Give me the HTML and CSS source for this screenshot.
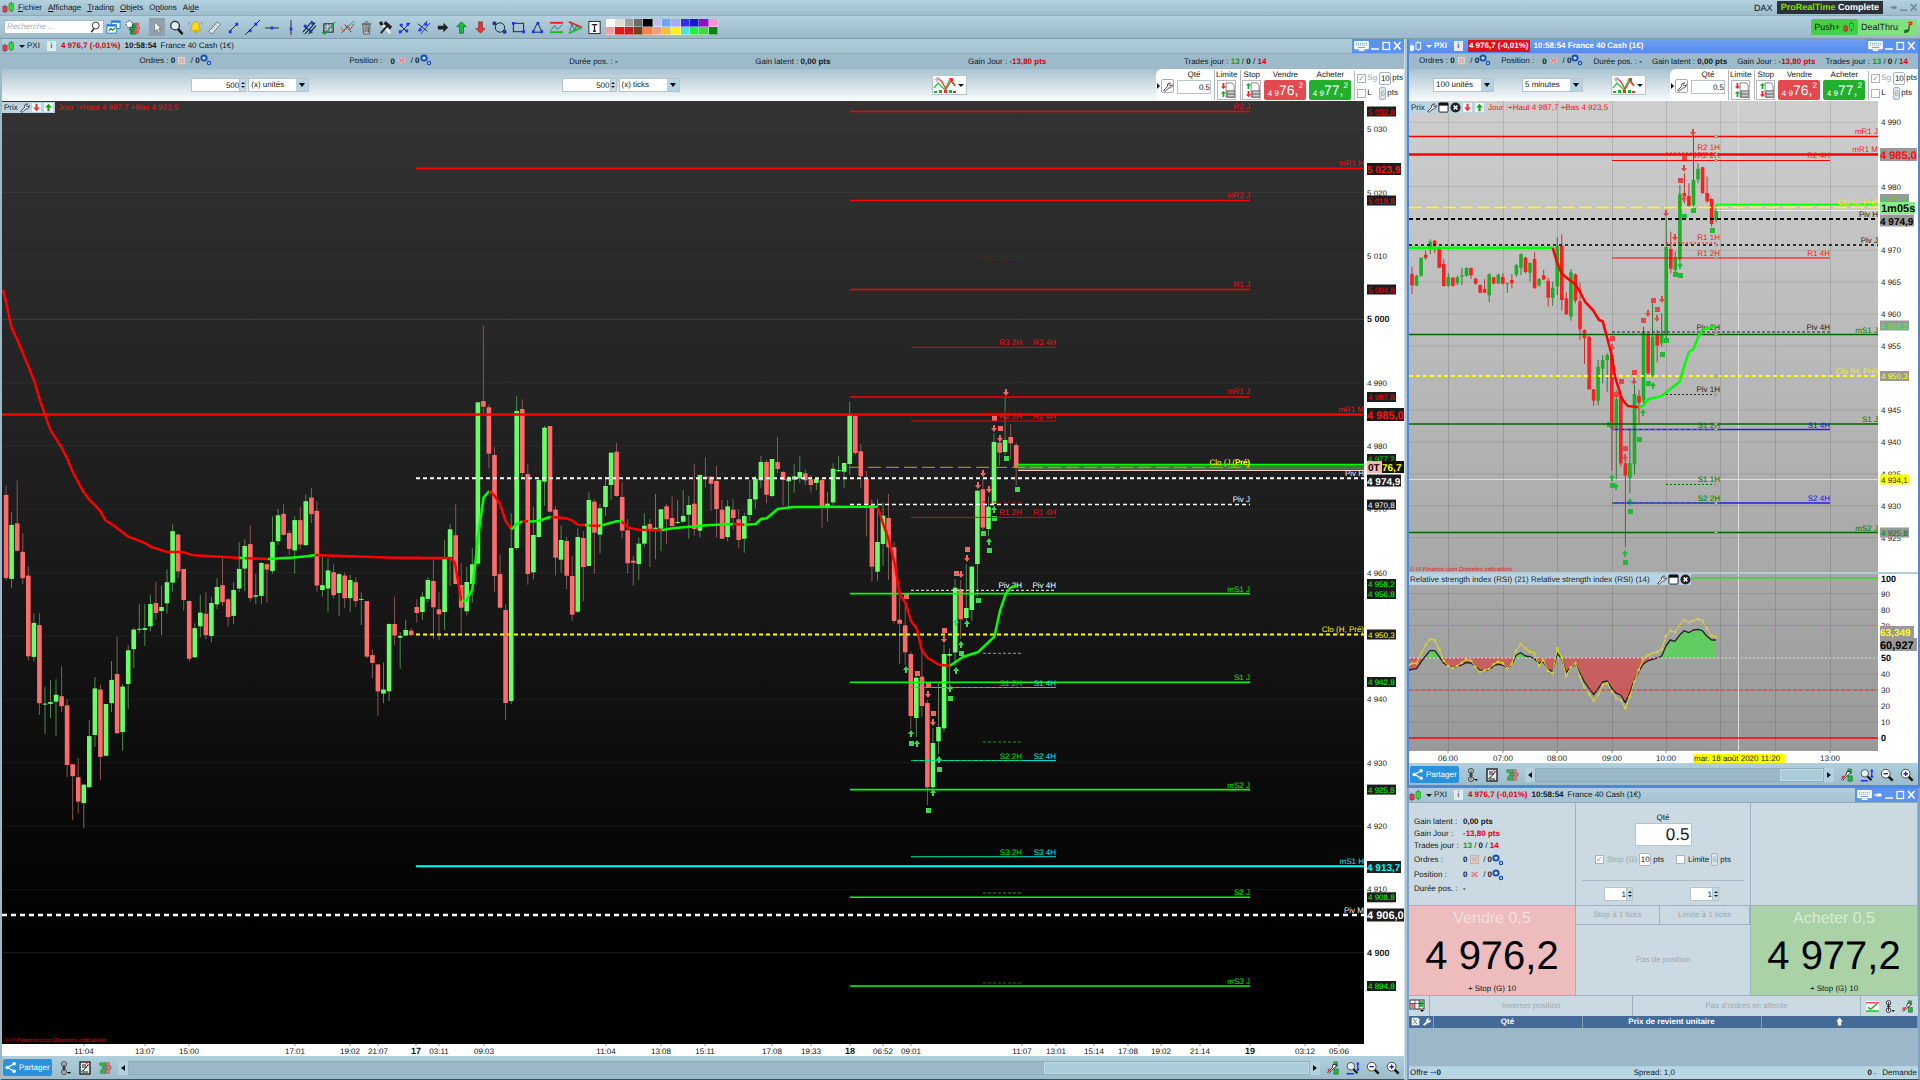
FILE: index.html
```html
<!DOCTYPE html>
<html lang="fr">
<head>
<meta charset="utf-8">
<title>ProRealTime Complete - DAX</title>
<link rel="stylesheet" href="styles.css">
</head>
<body>
<svg class="sprite" aria-hidden="true">
  <symbol id="i-candles" viewBox="0 0 14 14"><path d="M3 4v9M10 1v11" stroke="#333" stroke-width=".8"/><rect x="1" y="6" width="4.500" height="5.500" fill="#e0404a" stroke="#a02028" stroke-width=".6"/><rect x="7.500" y="3" width="5" height="7" fill="#30d840" stroke="#159020" stroke-width=".6"/></symbol>
  <symbol id="i-candles-w" viewBox="0 0 14 14"><path d="M3 4v9M10 1v11" stroke="#fff" stroke-width=".8"/><rect x="1" y="6" width="4.500" height="5.500" fill="#fff"/><rect x="7.500" y="3" width="5" height="7" fill="#5b92f0" stroke="#fff"/></symbol>
  <symbol id="i-gear" viewBox="0 0 12 12"><circle cx="4" cy="4" r="2.600" fill="#cfe0ff" stroke="#1450b8" stroke-width="2"/><circle cx="9" cy="9" r="1.600" fill="#cfe0ff" stroke="#1450b8" stroke-width="1.300"/></symbol>
  <symbol id="i-del" viewBox="0 0 10 10"><rect x=".5" y=".5" width="9" height="9" fill="#d6d2cf" stroke="#b8b4b0"/><path d="M2.500 2.500l5 5M7.500 2.500l-5 5" stroke="#e0a8a0" stroke-width="1.600"/></symbol>
  <symbol id="i-delr" viewBox="0 0 10 10"><path d="M1 2h8v6H1z" fill="#dcc0c6"/><path d="M2 2.500l6 5M8 2.500l-6 5" stroke="#e08088" stroke-width="1.400"/></symbol>
  <symbol id="i-wrench" viewBox="0 0 14 14"><path d="M2 12l5-5c-.8-3 1.500-5 4-4.500L9 4.500l1 1.500h2l1-1.500c.6 3-2 4.800-4 4.200L4 13z" fill="#fff" stroke="#222" stroke-width="1"/></symbol>
  <symbol id="i-win" viewBox="0 0 12 12"><rect x="1" y="1" width="10" height="10" rx="1" fill="#fff" stroke="#111"/><path d="M1 1h10v3H1z" fill="#111"/></symbol>
  <symbol id="i-tabs" viewBox="0 0 12 12"><path d="M1 1h8l2 2v8H1z" fill="#fff"/><path d="M3 3l5 6M8 3L3 9M3 3h2M8 9H6" stroke="#446a98"/></symbol>
  <symbol id="i-wrench-w" viewBox="0 0 14 14"><path d="M2 12l5-5c-.8-3 1.500-5 4-4.500L9 4.500l1 1.500h2l1-1.500c.6 3-2 4.800-4 4.200L4 13z" fill="#fff" stroke="#fff"/></symbol>
  <symbol id="i-close" viewBox="0 0 12 12"><circle cx="6" cy="6" r="5.500" fill="#222"/><path d="M4 4l4 4M8 4l-4 4" stroke="#fff" stroke-width="1.700"/></symbol>
  <symbol id="i-up" viewBox="0 0 10 10"><path d="M1 1h8v8H1z" fill="#f4f8fa"/><path d="M5 1.500L8 5H6v3.500H4V5H2z" fill="#1a1"/></symbol>
  <symbol id="i-down" viewBox="0 0 10 10"><path d="M1 1h8v8H1z" fill="#f4f8fa"/><path d="M5 8.500L2 5h2V1.500h2V5h2z" fill="#e33"/></symbol>
  <symbol id="i-kbd" viewBox="0 0 16 12"><rect x="0" y="0" width="16" height="9" rx="1" fill="#fff"/><path d="M2 2.500h12M2 4.500h12" stroke="#5b92f0" stroke-dasharray="1.300 .9"/><path d="M4 7h8" stroke="#5b92f0"/><path d="M5 9h6v2H5z" fill="#fff"/></symbol>
  <symbol id="i-min" viewBox="0 0 10 10"><path d="M1 8h8" stroke="currentColor" stroke-width="1.500"/></symbol>
  <symbol id="i-max" viewBox="0 0 10 10"><rect x="2" y="1.500" width="6.500" height="7" fill="none" stroke="currentColor" stroke-width="1.300"/></symbol>
  <symbol id="i-x" viewBox="0 0 10 10"><path d="M2 1l6.500 7.500M8.500 1L2 8.500" stroke="currentColor" stroke-width="1.700"/></symbol>
  <symbol id="i-pin" viewBox="0 0 10 10"><path d="M1 5h3M4 3v4M5 4h3v2H5z" stroke="currentColor" fill="currentColor"/></symbol>
  <symbol id="i-wins" viewBox="0 0 16 16"><rect x="6" y="1" width="9" height="8" fill="#fff" stroke="#2c7be0"/><path d="M6 2h9" stroke="#2c7be0" stroke-width="2"/><rect x="1" y="5" width="10" height="9" fill="#fff" stroke="#2c7be0"/><path d="M1 6h10" stroke="#2c7be0" stroke-width="2"/><path d="M3 12l2-3 2 2 3-3" stroke="#191" fill="none" stroke-width="1.200"/></symbol>
  <symbol id="i-book" viewBox="0 0 16 16"><path d="M2 2h7v3H2zM5 6h5v3H5zM3 10h6v4H3z" fill="#3cb84a" stroke="#274" stroke-width=".6"/><path d="M9 2h4v3H9zM10 6h5v3h-5zM9 10h4v4H9z" fill="#e88080" stroke="#944" stroke-width=".6"/></symbol>
  <symbol id="i-bookgear" viewBox="0 0 16 16"><path d="M6 4h6v3H6zM5 8h7v3H5zM6 12h6v3H6z" fill="#2a9a3a" stroke="#174"/><path d="M11 3h4v3h-4zM11 7h5v3h-5zM10 11h5v3h-5z" fill="#e05a5a"/><circle cx="4.500" cy="4.500" r="3.500" fill="#fff" stroke="#333" stroke-dasharray="2 1"/></symbol>
  <symbol id="i-cursor" viewBox="0 0 16 16"><path d="M5 2v10l2.500-2 2 4 1.700-.8-2-4H12z" fill="#fff" stroke="#777" stroke-width=".9"/></symbol>
  <symbol id="i-zoom" viewBox="0 0 16 16"><path d="M9 9l5.500 6" stroke="#111" stroke-width="2.600"/><circle cx="6.500" cy="6" r="4.600" fill="#dfeef6" stroke="#222" stroke-width="1.300"/></symbol>
  <symbol id="i-find" viewBox="0 0 16 16"><path d="M6.500 10L3 15" stroke="#333" stroke-width="2"/><circle cx="9" cy="6" r="4.600" fill="#fff" stroke="#333" stroke-width="1.300"/></symbol>
  <symbol id="i-zin" viewBox="0 0 16 16"><path d="M9.500 9.500l5 5" stroke="#111" stroke-width="2.800"/><circle cx="6.500" cy="6.500" r="5" fill="#fff" stroke="#333"/><path d="M4 6.500h5M6.500 4v5" stroke="#22c" stroke-width="1.600"/></symbol>
  <symbol id="i-zout" viewBox="0 0 16 16"><path d="M9.500 9.500l5 5" stroke="#111" stroke-width="2.800"/><circle cx="6.500" cy="6.500" r="5" fill="#fff" stroke="#333"/><path d="M4 6.500h5" stroke="#22c" stroke-width="1.600"/></symbol>
  <symbol id="i-zfit" viewBox="0 0 16 16"><path d="M8 9l5 5" stroke="#111" stroke-width="2.400"/><circle cx="5.500" cy="6" r="4.300" fill="#e4eef4" stroke="#444"/><path d="M13.500 2v9M2 14.500h7" stroke="#23e" stroke-width="1.600"/><path d="M11.500 4l2-3 2 3zM11.500 9l2 3 2-3zM0 14.500l3-1.500v3z" fill="#23e"/></symbol>
  <symbol id="i-bell" viewBox="0 0 16 16"><path d="M8 2c3.500 0 4 3 4 6l1.500 3.500h-11L4 8c0-3 .5-6 4-6z" fill="#ffd820" stroke="#c89000" stroke-width=".7"/><path d="M6.500 12.500h3L8 15z" fill="#c89000"/><path d="M2 2l-1.500 3M14 2l1.500 3" stroke="#888"/></symbol>
  <symbol id="i-ruler" viewBox="0 0 16 16"><path d="M2 12L11 2l3 3L5 15z" fill="#e8eef0" stroke="#555" stroke-width=".8"/><path d="M5 9l1.500 1.500M7 7l1.500 1.500M9 5l1.500 1.500" stroke="#555" stroke-width=".8"/></symbol>
  <symbol id="i-seg" viewBox="0 0 16 16"><path d="M4 12l8-8" stroke="#222"/><path d="M3 11h3v3H3zM10 3h3v3h-3z" fill="#23e"/></symbol>
  <symbol id="i-line" viewBox="0 0 16 16"><path d="M0 16L16 0" stroke="#222"/><path d="M4 10h3v3H4zM10 3h3v3h-3z" fill="#23e"/></symbol>
  <symbol id="i-hl" viewBox="0 0 16 16"><path d="M1 8.500h15" stroke="#222"/><path d="M7 7h3v3H7z" fill="#23e"/></symbol>
  <symbol id="i-vl" viewBox="0 0 16 16"><path d="M8.500 0v16" stroke="#222"/><path d="M7 8h3v3H7z" fill="#23e"/></symbol>
  <symbol id="i-fork" viewBox="0 0 16 16"><path d="M1 13L11 1M3 15L14 3M7 15l8-9M2 6l9 8" stroke="#123" stroke-width="1.100"/><path d="M2 5h3v3H2zM8 10h3v3H8zM10 2h3v3h-3z" fill="#23e"/></symbol>
  <symbol id="i-study" viewBox="0 0 16 16"><rect x="3" y="4" width="10" height="9" fill="#89a" stroke="#223"/><path d="M4 7h8M4 10h8M7 4v9M10 4v9" stroke="#dde" stroke-width=".7"/><path d="M1 13l3 2 11-13" stroke="#1a3" stroke-width="1.400" fill="none"/></symbol>
  <symbol id="i-reg" viewBox="0 0 16 16"><path d="M1 14L15 1" stroke="#1a3"/><path d="M1 8l3 4 4-6 3 4 4-6" stroke="#c33" fill="none"/><path d="M5 5l7 8" stroke="#222" stroke-dasharray="2 1"/></symbol>
  <symbol id="i-trash" viewBox="0 0 16 16"><path d="M4 5h8l-1 10H5z" fill="#ccc" stroke="#555"/><path d="M3 4h10M6 2h4M6.500 6v7M8.500 6v7M10 6v7" stroke="#555"/></symbol>
  <symbol id="i-tools" viewBox="0 0 16 16"><path d="M4 4l9 10" stroke="#eee" stroke-width="2.500"/><path d="M3 14L11 5" stroke="#222" stroke-width="2"/><path d="M8 1l7 6-2 3-7-6zM1 3l3-2 2 4-3 1z" fill="#222"/></symbol>
  <symbol id="i-x1" viewBox="0 0 16 16"><path d="M3 14L14 3M3 5l8 8" stroke="#123"/><path d="M2 11h3v3H2zM10 3h3v3h-3zM3 4h3v3H3zM9 10h3v3H9z" fill="#23e"/></symbol>
  <symbol id="i-x2" viewBox="0 0 16 16"><path d="M2 12L12 1M5 15L15 3" stroke="#23e"/><path d="M2 4l10 8" stroke="#222"/><path d="M3 9h3v3H3zM9 3h3v3H9z" fill="#23e"/></symbol>
  <symbol id="i-right" viewBox="0 0 16 16"><path d="M14 8L9 3v3H3v4h6v3z" fill="#222"/></symbol>
  <symbol id="i-bup" viewBox="0 0 16 16"><path d="M8 2l5 5H10v7H6V7H3z" fill="#2b3" stroke="#174"/></symbol>
  <symbol id="i-wup" viewBox="0 0 16 16"><path d="M8 1l6 7h-3v7H5V8H2z" fill="#fff"/></symbol>
  <symbol id="i-bdn" viewBox="0 0 16 16"><path d="M8 14L3 9h3V2h4v7h3z" fill="#e33" stroke="#822" stroke-width=".7"/></symbol>
  <symbol id="i-ell" viewBox="0 0 16 16"><circle cx="8.500" cy="8" r="5" fill="none" stroke="#123"/><path d="M1 2h3v3H1zM12 11h3v3h-3zM1 4h4" fill="#23e" stroke="#123" stroke-width=".6"/></symbol>
  <symbol id="i-rect" viewBox="0 0 16 16"><rect x="2.500" y="3.500" width="11" height="9" fill="none" stroke="#123"/><path d="M1 2h3v3H1zM12 11h3v3h-3z" fill="#23e"/></symbol>
  <symbol id="i-tri" viewBox="0 0 16 16"><path d="M8 3l5 10H3z" fill="none" stroke="#123"/><path d="M7 2h3v3H7zM2 11h3v3H2zM11 11h3v3h-3z" fill="#23e"/></symbol>
  <symbol id="i-pat1" viewBox="0 0 16 16"><path d="M1 3h14" stroke="#e22" stroke-width="2"/><path d="M1 13h14" stroke="#1b2" stroke-width="2"/><path d="M2 11l4-5 3 4 5-5" fill="none" stroke="#276"/></symbol>
  <symbol id="i-pat2" viewBox="0 0 16 16"><path d="M1 2l14 6" stroke="#e22" stroke-width="2"/><path d="M1 14L15 8" stroke="#1b2" stroke-width="2"/><path d="M2 12l2-8 3 7 2-5 2 3" fill="none" stroke="#276"/></symbol>
  <symbol id="i-text" viewBox="0 0 16 16"><rect x="2" y="1.500" width="12" height="13" fill="#fff" stroke="#222"/><path d="M5 5h6M8 5v7M6.500 12h3" stroke="#222" stroke-width="1.400"/></symbol>
  <symbol id="i-chart" viewBox="0 0 24 18"><path d="M1 12l4-5 3 3 4 4 5-11 5 6" fill="none" stroke="#2c3" stroke-width="1.300"/><path d="M5 2l4 4 4 7 5-8 4 5" fill="none" stroke="#e33" stroke-width="1.300"/><path d="M4 1v5M1.500 3.500h5" stroke="#bbb" stroke-width="1.600"/><path d="M17 2h3v3h-3z" fill="#e33"/><path d="M1 15h3v2H1zM6 14h3v3H6zM16 14h3v3h-3z" fill="#2a3"/><path d="M11 14h3v3h-3zM20 15h3v2h-3z" fill="#d33"/></symbol>
  <symbol id="i-lim" viewBox="0 0 18 20"><path d="M8 2h7l2 3v13H8z" fill="#fff" stroke="#777"/><path d="M9 11h9v7H9z" fill="#ccc" stroke="#555"/><path d="M9 14.500h9" stroke="#555"/><path d="M5 9L2 6h2V2h2v4h2z" fill="#e22"/><path d="M5 11l3 3H6v4H4v-4H2z" fill="#1a2"/></symbol>
  <symbol id="i-stp" viewBox="0 0 18 20"><path d="M8 2h7l2 3v13H8z" fill="#fff" stroke="#777"/><path d="M9 11h9v7H9z" fill="#ccc" stroke="#555"/><path d="M9 14.500h9" stroke="#555"/><path d="M5 2l3 3H6v4H4V5H2z" fill="#1a2"/><path d="M5 18l-3-3h2v-4h2v4h2z" fill="#e22"/></symbol>
  <symbol id="i-share" viewBox="0 0 12 12"><path d="M10 2L3 6l7 4" stroke="#fff" fill="none" stroke-width="1.300"/><circle cx="10" cy="2" r="1.900" fill="#fff"/><circle cx="2.500" cy="6" r="2" fill="#fff"/><circle cx="10" cy="10" r="1.900" fill="#fff"/></symbol>
  <symbol id="i-link" viewBox="0 0 12 14"><circle cx="5" cy="3" r="2.400" fill="#fff" stroke="#222"/><circle cx="5" cy="11" r="2.400" fill="#fff" stroke="#222"/><path d="M5 2v10M3 7h4" stroke="#222"/><path d="M8 11h4l-2 2z"/></symbol>
  <symbol id="i-doc" viewBox="0 0 12 14"><rect x="1" y="1" width="10" height="12" fill="#e8e8e8" stroke="#222" stroke-width="1.400"/><path d="M3 4h4M3 6h5M4 10l5-6M3 11h6" stroke="#222"/><path d="M7 2l3 2" stroke="#e33"/><path d="M2 11l2-2" stroke="#1a2"/></symbol>
  <symbol id="i-setup" viewBox="0 0 16 16"><path d="M9 1h4v5H9zM9 9h5v6H9z" fill="#2b3" stroke="#153" stroke-width=".6"/><path d="M2 13l5-5 1-4 4 0-1 3-3 2-5 5z" fill="#fff" stroke="#222"/><path d="M2 9h3v3H2z" fill="#e33"/></symbol>
  <symbol id="i-lay" viewBox="0 0 16 14"><rect x="1" y="1" width="14" height="9" fill="#fff" stroke="#333"/><path d="M2 4h4v5H2z" fill="#e77"/><path d="M10 2h4v6h-4z" fill="#3b4"/><path d="M1 4.500h14M6 1v9M10 1v9" stroke="#333" stroke-width=".7"/><path d="M11 11h4l-2 2z"/></symbol>
  <symbol id="i-check" viewBox="0 0 14 14"><rect x="0" y="1" width="14" height="12" fill="#fff"/><path d="M0 3h14" stroke="#e44" stroke-width="1.500"/><path d="M0 12h14" stroke="#3c4" stroke-width="2"/><path d="M2 8l3 2 7-6" stroke="#2a3" fill="none" stroke-width="1.500"/></symbol>
  <symbol id="i-deal" viewBox="0 0 12 16"><path d="M7 2c4 0 4-1 4-1v3C8 4 8 5 8 8" stroke="#e22" stroke-width="2" fill="none"/><path d="M8 8c0 4-1 6-6 6M2 12l6-1" stroke="#186820" stroke-width="2" fill="none"/></symbol>
</svg>

<header class="app-head">
  <nav class="menu">
    <svg class="ic14"><use href="#i-candles"/></svg>
    <a href="#"><u>F</u>ichier</a><a href="#"><u>A</u>ffichage</a><a href="#"><u>T</u>rading</a><a href="#"><u>O</u>bjets</a><a href="#">O<u>p</u>tions</a><a href="#">Ai<u>d</u>e</a>
    <span class="account">DAX</span>
    <span class="brand"><em>ProRealTime</em> Complete</span>
    <span class="win-btns faded"><button aria-label="Épingler"><svg><use href="#i-pin"/></svg></button><button aria-label="Réduire"><svg><use href="#i-min"/></svg></button><button aria-label="Fermer"><svg><use href="#i-x"/></svg></button></span>
  </nav>
  <div class="tools">
    <label class="search"><input type="text" placeholder="Recherche ..." aria-label="Recherche"><svg class="ic12"><use href="#i-find"/></svg></label>
    <div class="tool-list" id="tool-list"></div>
    <div class="palette" id="palette"></div>
    <div class="push"><button class="push-a">Push+ <svg class="ic12"><use href="#i-candles"/></svg></button><button class="push-b">DealThru <svg class="ic14"><use href="#i-deal"/></svg></button></div>
  </div>
</header>

<main class="desk">
  <section class="window main-win">
    <header class="title">
      <svg class="ic14"><use href="#i-candles"/></svg><span class="caret"></span><span>PXI</span><span class="info-i">i</span>
      <b class="neg">4 976,7 (-0,01%)</b><b>10:58:54</b><span>France 40 Cash (1€)</span>
      <span class="win-btns active"><button aria-label="Clavier"><svg class="kbd"><use href="#i-kbd"/></svg></button><button aria-label="Réduire"><svg><use href="#i-min"/></svg></button><button aria-label="Agrandir"><svg><use href="#i-max"/></svg></button><button aria-label="Fermer"><svg><use href="#i-x"/></svg></button></span>
    </header>
    <div class="stats" data-stats></div>
    <div class="chart-tools">
      <div class="periods wide">
        <span class="pair"><input class="num" value="500" aria-label="Nombre d'unités"><span class="spin"></span><select aria-label="Type d'unités"><option>(x) unités</option></select></span>
        <span class="pair"><input class="num" value="500" aria-label="Nombre de ticks"><span class="spin"></span><select aria-label="Type de ticks"><option>(x) ticks</option></select></span>
        <button class="chart-btn" aria-label="Indicateurs"><svg><use href="#i-chart"/></svg><span class="caret"></span></button>
      </div>
      <div class="trade" data-trade></div>
    </div>
    <svg class="chart" id="main-chart" viewBox="2 101 1402 955" preserveAspectRatio="xMinYMin meet" role="img" aria-label="Prix 500 ticks"></svg>
    <footer class="share-bar" data-share></footer>
  </section>

  <div class="side">
    <section class="window side-win">
      <header class="title blue">
        <svg class="ic14"><use href="#i-candles-w"/></svg><span class="caret"></span><span>PXI</span><span class="info-i">i</span>
        <b class="neg-tag">4 976,7 (-0,01%)</b><b>10:58:54 France 40 Cash (1€)</b>
        <span class="win-btns active"><button aria-label="Clavier"><svg class="kbd"><use href="#i-kbd"/></svg></button><button aria-label="Réduire"><svg><use href="#i-min"/></svg></button><button aria-label="Agrandir"><svg><use href="#i-max"/></svg></button><button aria-label="Fermer"><svg><use href="#i-x"/></svg></button></span>
      </header>
      <div class="stats" data-stats></div>
      <div class="chart-tools">
        <div class="periods">
          <select class="wide-sel" aria-label="Unités"><option>100 unités</option></select>
          <select class="wide-sel" aria-label="Période"><option>5 minutes</option></select>
          <button class="chart-btn" aria-label="Indicateurs"><svg><use href="#i-chart"/></svg><span class="caret"></span></button>
        </div>
        <div class="trade" data-trade></div>
      </div>
      <svg class="chart" id="side-chart" viewBox="1409 101 509 662" preserveAspectRatio="xMinYMin meet" role="img" aria-label="Prix 5 minutes et RSI"></svg>
      <footer class="share-bar" data-share="short"></footer>
    </section>

    <section class="window order-win">
      <header class="title">
        <svg class="ic14"><use href="#i-candles"/></svg><span class="caret"></span><span>PXI</span><span class="info-i">i</span>
        <b class="neg">4 976,7 (-0,01%)</b><b>10:58:54</b><span>France 40 Cash (1€)</span>
        <span class="win-btns active"><button aria-label="Clavier"><svg class="kbd"><use href="#i-kbd"/></svg></button><button aria-label="Épingler"><svg><use href="#i-pin"/></svg></button><button aria-label="Réduire"><svg><use href="#i-min"/></svg></button><button aria-label="Agrandir"><svg><use href="#i-max"/></svg></button><button aria-label="Fermer"><svg><use href="#i-x"/></svg></button></span>
      </header>
      <div class="ticket">
        <dl class="summary">
          <dt>Gain latent :</dt><dd><b>0,00 pts</b></dd>
          <dt>Gain Jour :</dt><dd><b class="neg">-13,80 pts</b></dd>
          <dt>Trades jour :</dt><dd><b class="pos">13</b> / <b>0</b> / <b class="neg">14</b></dd>
          <dt>Ordres :</dt><dd><b>0</b> <svg class="ic10"><use href="#i-del"/></svg> &nbsp;/ <b>0</b><svg class="ic12"><use href="#i-gear"/></svg></dd>
          <dt>Position :</dt><dd><b>0</b> <svg class="ic10"><use href="#i-delr"/></svg> &nbsp;/ <b>0</b><svg class="ic12"><use href="#i-gear"/></svg></dd>
          <dt>Durée pos. :</dt><dd><b>-</b></dd>
        </dl>
        <div class="qty">
          <label for="qty">Qté</label>
          <input id="qty" class="big-qty" value="0.5">
          <div class="risk">
            <label class="dim"><input type="checkbox" checked disabled> Stop (G)</label><input class="mini" value="10" aria-label="Stop en points"><span>pts</span>
            <label class="gap"><input type="checkbox"> Limite</label><input class="mini off" value="6" aria-label="Limite en points"><span>pts</span>
          </div>
          <div class="ticks">
            <span class="pair"><input class="num" value="1" aria-label="Ticks du stop"><span class="spin"></span></span>
            <span class="pair"><input class="num" value="1" aria-label="Ticks de la limite"><span class="spin"></span></span>
          </div>
        </div>
        <div></div>
        <button class="deal sell"><span>Vendre 0,5</span><strong>4 976,2</strong><small>+ Stop (G) 10</small></button>
        <div class="middle"><button disabled>Stop à 1 ticks</button><button disabled>Limite à 1 ticks</button><p>Pas de position</p></div>
        <button class="deal buy"><span>Acheter 0,5</span><strong>4 977,2</strong><small>+ Stop (G) 10</small></button>
      </div>
      <div class="actions">
        <svg class="ic16"><use href="#i-lay"/></svg>
        <button disabled>Inverser position</button><button disabled>Pas d'ordres en attente</button>
        <span class="icons"><svg class="ic14"><use href="#i-check"/></svg><svg class="ic14"><use href="#i-link"/></svg><svg class="ic14"><use href="#i-setup"/></svg></span>
      </div>
      <table class="positions">
        <thead><tr><th class="c-ic"><svg class="ic10"><use href="#i-tabs"/></svg> <svg class="ic10"><use href="#i-wrench-w"/></svg></th><th class="c-q">Qté</th><th class="c-p">Prix de revient unitaire</th><th><svg class="ic10"><use href="#i-wup"/></svg></th></tr></thead>
      </table>
      <footer class="spread"><span>Offre <i>➞</i><b>0</b></span><span>Spread: 1,0</span><span><b>0</b><i>←</i> Demande</span></footer>
    </section>
  </div>
</main>
<script src="charts.js"></script>
</body>
</html>
```
FILE: styles.css
```css
* { box-sizing: border-box; }
body {
  margin: 0; height: 100vh; min-width: 1280px; display: flex; flex-direction: column;
  font: 8px/10px "Liberation Sans", Arial, sans-serif; color: #101820; background: #9cb9c8; overflow: hidden;
  text-rendering: geometricPrecision;
}
button, input, select { font: inherit; color: inherit; margin: 0; padding: 0; border: 0; background: none; border-radius: 0; text-rendering: inherit; }
button { cursor: pointer; }
a { color: inherit; text-decoration: none; }
svg { flex: none; }
.sprite { position: absolute; width: 0; height: 0; }
.ic10 { width: 9px; height: 9px; vertical-align: middle; }
.ic12 { width: 12px; height: 12px; vertical-align: middle; }
.ic14 { width: 13px; height: 13px; }
.ic16 { width: 16px; height: 14px; }
.neg { color: #d8000c; }
.pos { color: #0a9a14; }
.caret { width: 0; height: 0; border: 3px solid transparent; border-top-color: currentColor; border-bottom: 0; }

.menu { height: 16px; display: flex; align-items: center; gap: 6px; padding: 0 2px; background: linear-gradient(#b4d1df, #9ebccb); border-bottom: 1px solid #8fabb9; }
.menu > svg { margin-right: -3px; }
.account { margin-left: auto; margin-right: -2px; font-size: 9px; }
.brand { height: 13px; padding: 1px 4px; background: #2c3238; color: #fff; font-weight: bold; font-size: 9px; }
.brand em { color: #7ee000; font-style: normal; }
.win-btns { display: flex; align-items: center; gap: 2px; margin-left: auto; height: 100%; }
.win-btns button { height: 12px; display: flex; align-items: center; }
.win-btns svg { width: 10px; height: 10px; }
.win-btns .kbd { width: 15px; height: 11px; }
.active { background: #5b92f0; color: #fff; padding: 0 2px; gap: 1px; }
.faded { color: #6d8794; margin-left: 0; gap: 1px; }
.faded svg { width: 9px; height: 9px; }

.tools { height: 23px; display: flex; align-items: center; background: linear-gradient(#b2d0de, #9bb9c8); border-bottom: 1px solid #7f9ba8; padding: 0 3px 0 4px; }
.search { width: 100px; height: 14px; display: flex; align-items: center; background: #fff; border: 1px solid #a9bac2; padding: 0 2px; }
.search input { width: 82px; font-style: italic; outline: 0; }
.search input::placeholder { color: #aaa; }
.tool-list { display: flex; gap: 3px; margin-left: 1px; }
.tool-list button { width: 16px; height: 18px; display: flex; align-items: center; justify-content: center; }
.tool-list button:nth-child(3) { background: #8ea3ae; margin-left: 6px; }
.tool-list svg { width: 15px; height: 15px; }
.palette { width: 112px; height: 16px; display: grid; grid-template-columns: repeat(12, 1fr); grid-auto-rows: 8px; margin-left: 4px; }
.palette button { border: 1px solid rgba(255,255,255,.4); border-width: 0 1px 1px 0; }
.push { margin-left: auto; display: flex; }
.push button { height: 16px; display: flex; align-items: center; gap: 3px; padding: 0 3px; border-radius: 2px; font-size: 9px; }
.push-a { background: #45cf45; }
.push-b { background: #7fe27f; }

.desk { flex: 1; min-height: 0; display: grid; grid-template-columns: 1405fr 515fr; }
.window { display: flex; flex-direction: column; min-width: 0; min-height: 0; }
.main-win { border-left: 2px solid #9cb9c8; border-bottom: 1px solid #3d4d55; border-right: 1px solid #cfe0e8; }
.side { display: flex; flex-direction: column; min-height: 0; padding-left: 2px; background: #a9c4d2; }
.side-win { flex: 1; border: solid #4d87de; border-width: 0 2px 3px; }
.order-win { border: solid #7fa2c8; border-width: 0 2px; border-bottom: 1px solid #3d4d55; }

.title { flex: none; height: 15px; display: flex; align-items: center; gap: 4px; background: linear-gradient(#b0cfdd, #a4c2d0); border-bottom: 1px solid #8fabb9; white-space: nowrap; }
.title .caret { margin: 0 -2px 0 0; }
.title.blue { background: linear-gradient(#6fa0f4, #558bec); color: #fff; font-weight: bold; }
.info-i { width: 9px; height: 10px; background: #e4ebee; color: #667; text-align: center; margin: 0 1px 0 3px; font-weight: bold; }
.neg-tag { background: #e0101a; padding: 1px; }

.stats { flex: none; height: 15px; display: flex; align-items: center; justify-content: space-evenly; white-space: nowrap; background: #9cbaca; }
.stats svg { margin-top: -2px; }
.stats .pad { padding-left: 6px; }
.chart-tools { flex: none; height: 32px; display: flex; background: linear-gradient(#a9c3d0, #fafcfd); }
.periods { flex: 1; display: flex; align-items: center; justify-content: space-between; padding: 0 24px; }
.periods.wide { padding: 0 13.5%; }
.pair { display: inline-flex; align-items: center; }
.pair .num { width: 48px; height: 14px; text-align: right; background: #fff; border: 1px solid #b5c4cb; border-right: 0; }
.spin { width: 7px; height: 14px; background: #c5dbe6; border: 1px solid #b5c4cb; display: flex; flex-direction: column; align-items: center; justify-content: space-evenly; }
.spin::before, .spin::after { content: ""; border: 2px solid transparent; }
.spin::before { border-bottom-color: #222; border-top: 0; }
.spin::after { border-top-color: #222; border-bottom: 0; }
select { appearance: none; width: 61px; height: 14px; padding-left: 2px; border: 1px solid #b5c4cb;
  background: #fff url("data:image/svg+xml,%3Csvg xmlns='http://www.w3.org/2000/svg' width='12' height='12'%3E%3Cpath d='M0 0h12v12H0z' fill='%23b5d3e2'/%3E%3Cpath d='M3 4h6l-3 4z'/%3E%3C/svg%3E") no-repeat right center; }
.pair select { margin-left: 2px; }
.chart-btn { width: 35px; height: 20px; background: #fff; border: 1px solid #b8c6cc; display: flex; align-items: center; justify-content: space-between; padding-right: 2px; }
.chart-btn svg { width: 24px; height: 18px; }

.trade { width: 248px; flex: none; background: #fff; border-radius: 6px 0 0 6px; display: flex; align-items: flex-end; padding: 1px 1px 1px 0; gap: 3px; }
.trade::before { content: ""; border: 3px solid transparent; border-left-color: #111; border-right: 0; margin: 0 -2px 11px 1px; }
.trade > label, .trade > div { display: flex; flex-direction: column; align-items: center; }
.trade .wr { width: 13px; height: 14px; border: 1px solid #aab; border-radius: 2px; margin-bottom: 7px; display: flex; align-items: center; }
.trade .wr svg { width: 11px; height: 11px; }
.trade .q { width: 34px; height: 14px; border: 1px solid #b8c6cc; text-align: right; margin-bottom: 6px; background: #fff; }
.trade .ls { border-left: 1px solid #aeb8bc; padding-left: 1px; width: 24px; }
.trade .ls button { width: 19px; height: 20px; border: 1px solid #b8b8b8; }
.trade .ls svg { width: 16px; height: 18px; }
.price { width: 42px; height: 20px; color: #fff; display: flex; align-items: flex-end; justify-content: center; border-radius: 2px; line-height: 8px; padding-bottom: 2px; white-space: nowrap; }
.price big { font-size: 14px; line-height: 16px; }
.price sup { align-self: flex-start; font-size: 8px; line-height: 12px; }
.price.s { background: #e24a4f; }
.price.b { background: #22b02c; }
.trade .risk2 { align-items: flex-start; gap: 1px; border-left: 1px solid #aeb8bc; padding-left: 2px; flex: 1; }
.risk2 p { margin: 0; display: flex; align-items: center; height: 14px; gap: 1px; white-space: nowrap; }
.risk2 label { display: flex; align-items: center; gap: 1px; width: 21px; }
input[type=checkbox] { appearance: none; width: 9px; height: 9px; border: 1px solid #a9b4b9; background: #fff; margin: 0; line-height: 8px; flex: none; }
input[type=checkbox]:checked::before { content: "✓"; color: #888; }
.dim { color: #9aa4a9; }
.mini { width: 12px; height: 13px; border: 1px solid #a9b4b9; border-radius: 2px; background: #fff; text-align: center; }
.mini.off { width: 7px; background: #dbe6ec; color: #9aa4a9; }

.chart { flex: 1; width: 100%; min-height: 0; background: #fff; display: block; }
.chart text { font: 8px "Liberation Sans", Arial, sans-serif; text-rendering: geometricPrecision; }
.chart .b9 { font-size: 9px; font-weight: bold; }
.chart .b10 { font-size: 10px; font-weight: bold; }
.chart .b11 { font-size: 11px; font-weight: bold; }
.chart .tiny { font-size: 6px; font-style: italic; }

.share-bar { flex: none; height: 23px; display: flex; align-items: center; gap: 6px; padding: 0 4px 0 1px; background: linear-gradient(#b0cfdd, #9cbccb); }
.side-win .share-bar { height: 22px; padding-top: 1px; }
.share { height: 17px; width: 49px; background: #2a92dc; color: #fff; border-radius: 2px; display: flex; align-items: center; justify-content: space-evenly; }
.share svg { width: 11px; height: 11px; }
.share-bar .ic14 { width: 14px; height: 14px; }
.scroll { flex: 1; display: flex; height: 14px; }
.scroll button { width: 10px; background: #b3d2e0; display: flex; align-items: center; justify-content: center; }
.scroll button::before { content: ""; border: 3px solid transparent; border-right: 4px solid #111; border-left: 0; }
.scroll .next::before { border-left: 4px solid #111; border-right: 0; }
.track { flex: 1; background: #9ab8c7; border: 1px solid #8facbb; display: flex; justify-content: flex-end; }
.thumb { width: 22.5%; background: #abcbd9; border: 1px solid #c0dbe6; }
[data-share=short] .thumb { width: 15%; }

.ticket { display: grid; grid-template-columns: 167fr 175fr 167fr; grid-template-rows: 103px 90px; background: #cbdae2; }
.ticket > * { border-right: 1px solid #9db2bd; border-bottom: 1px solid #9db2bd; min-width: 0; }
.summary { margin: 0; padding: 13px 0 0 5px; display: grid; grid-template-columns: 49px 1fr; grid-template-rows: 12px 12px 12px 15px 15px 13px; align-items: center; white-space: nowrap; }
.summary dd { margin: 0; }
.qty { display: flex; flex-direction: column; align-items: center; padding-top: 10px; }
.big-qty { width: 57px; height: 23px; background: #fff; border: 1px solid #b5c4cb; font-size: 17px; text-align: right; padding-right: 1px; }
.risk { display: flex; align-items: center; margin-top: 7px; padding-bottom: 14px; border-bottom: 1px solid #a9bbc5; width: 162px; justify-content: center; gap: 2px; white-space: nowrap; }
.risk label { display: flex; align-items: center; gap: 3px; }
.risk .gap { margin-left: 10px; }
.ticks { display: flex; justify-content: space-between; width: 100%; padding: 6px 31px 0 28px; }
.ticks .num { width: 22px; }
.deal { display: flex; flex-direction: column; align-items: center; justify-content: space-between; padding: 4px 0 1px; white-space: nowrap; }
.deal span { font-size: 16px; line-height: 18px; color: #f5dede; }
.deal strong { font-size: 40px; line-height: 46px; font-weight: normal; color: #000; }
.deal small { font-size: 8px; }
.sell { background: #edbcbc; }
.buy { background: #aad2a6; }
.buy span { color: #d8ead6; }
.middle { display: grid; grid-template-columns: 84px 1fr; grid-template-rows: 19px 1fr; color: #9aa9b1; }
.middle button { border: 0 solid #9db2bd; border-width: 0 1px 1px 0; }
.middle p { grid-column: 1 / 3; margin: 0; align-self: center; text-align: center; }
.actions { height: 20px; display: grid; grid-template-columns: 20px 204fr 229fr 58px; align-items: center; background: #cbdae2; color: #9aa9b1; }
.actions button { height: 20px; border-left: 1px solid #9db2bd; }
.actions .icons { height: 20px; border-left: 1px solid #9db2bd; display: flex; align-items: center; justify-content: space-evenly; }
.positions { border-collapse: collapse; background: #446a98; color: #fff; width: 100%; table-layout: fixed; height: 12px; }
.positions th { font-weight: bold; padding: 0; line-height: 12px; border-right: 1px solid #7d9abb; }
.positions tr { height: 12px; }
.c-ic { width: 24px; white-space: nowrap; }
.c-q { width: 149px; }
.c-p { width: 179px; }
.spread { height: 51px; padding: 39px 1px 0; display: flex; justify-content: space-between; background: linear-gradient(#9cb8c8 74%, #b8d6e3 76%); line-height: 12px; }
.spread i { color: #2a80d8; font-style: normal; }
```
FILE: charts.js
```js
// ---------- toolbars shared by several windows ----------
const use = (id, cls) => `<svg class="${cls || ''}"><use href="#i-${id}"/></svg>`;

const toolNames = 'wins bookgear cursor zoom bell ruler seg line hl vl fork study reg trash tools x1 x2 right bup bdn ell rect tri pat1 pat2 text'.split(' ');
document.getElementById('tool-list').innerHTML =
  toolNames.map(n => `<button aria-label="${n}">${use(n)}</button>`).join('');

const colours = ['#fff', '#dcdcdc', '#a0a0a0', '#6a6a6a', '#000', '#c0c0f0', '#6fa4f4', '#a8a8ff', '#3030e8', '#1818c8', '#9010c0', '#ff90d0',
  '#f0a0a0', '#e01818', '#c02020', '#7a4018', '#ff8040', '#f0a080', '#f0c040', '#fff020', '#50e0e8', '#20f040', '#50d050', '#108018'];
document.getElementById('palette').innerHTML =
  colours.map(c => `<button aria-label="Couleur ${c}" style="background:${c}"></button>`).join('');

document.querySelectorAll('[data-stats]').forEach(el => {
  el.innerHTML = `<span>Ordres : <b>0</b> ${use('del', 'ic10')} &nbsp;/ <b>0</b>${use('gear', 'ic12')}</span>
    <span>Position : <b class="pad">0</b> ${use('delr', 'ic10')} &nbsp;/ <b>0</b>${use('gear', 'ic12')}</span>
    <span>Durée pos. : <b>-</b></span><span>Gain latent : <b>0,00 pts</b></span>
    <span>Gain Jour : <b class="neg">-13,80 pts</b></span>
    <span>Trades jour : <b class="pos">13</b> / <b>0</b> / <b class="neg">14</b></span>`;
});

document.querySelectorAll('[data-trade]').forEach(el => {
  el.innerHTML = `<button class="wr" aria-label="Réglages">${use('wrench')}</button>
    <label>Qté<input class="q" value="0.5"></label>
    <div class="ls">Limite<button aria-label="Limite">${use('lim')}</button></div>
    <div class="ls">Stop<button aria-label="Stop">${use('stp')}</button></div>
    <div>Vendre<button class="price s">4 9<big>76,</big><sup>2</sup></button></div>
    <div>Acheter<button class="price b">4 9<big>77,</big><sup>2</sup></button></div>
    <div class="risk2"><p><label class="dim"><input type="checkbox" checked disabled>Sg</label><input class="mini" value="10" aria-label="Stop">pts</p>
    <p><label><input type="checkbox">L</label><input class="mini off" value="6" aria-label="Limite">pts</p></div>`;
});

document.querySelectorAll('[data-share]').forEach(el => {
  el.innerHTML = `<button class="share">${use('share')}Partager</button>${use('link', 'ic14')}${use('doc', 'ic14')}${use('book', 'ic14')}
    <div class="scroll"><button aria-label="Gauche"></button><div class="track"><div class="thumb"></div></div><button class="next" aria-label="Droite"></button></div>
    ${use('setup', 'ic14')}${use('zfit', 'ic14')}${use('zout', 'ic14')}${use('zin', 'ic14')}`;
});

// ---------- drawing helpers ----------
const line = (x1, x2, y, c, w = 1, dash = '', o = 1) =>
  `<line x1="${x1}" x2="${x2}" y1="${y}" y2="${y}" stroke="${c}" stroke-width="${w}" stroke-dasharray="${dash}" stroke-opacity="${o}"/>`;
const vline = (x, y1, y2, c, w = 1) => `<line x1="${x}" x2="${x}" y1="${y1}" y2="${y2}" stroke="${c}" stroke-width="${w}"/>`;
const text = (x, y, s, c = '#222', anchor = 'start', cls = '') =>
  `<text x="${x}" y="${y}" fill="${c}" text-anchor="${anchor}" class="${cls}">${s}</text>`;
const box = (x, y, w, h, c) => `<rect x="${x}" y="${y}" width="${w}" height="${h}" fill="${c}"/>`;

// rows: colour letter, then high, top of body, bottom of body, low, in 1/k px below y0
function candles(rows, first, x0, step, width, y0, k, pal) {
  return rows.trim().split(/\s+/).map((row, n) => {
    const [h, t, b, l] = row.slice(1).split(',').map(v => y0 + v / k);
    const x = x0 + step * (first + n), c = pal[row[0]];
    return vline(x.toFixed(1), h.toFixed(1), l.toFixed(1), c.wick) +
      `<rect x="${(x - width / 2).toFixed(1)}" y="${t.toFixed(1)}" width="${width}" height="${Math.max(1, b - t).toFixed(1)}" fill="${c.body}"/>`;
  }).join('');
}
function curve(colour, pts, x0, y0, kx, ky, w = 2.5) {
  const p = pts.trim().split(/\s+/).map(s => s.split(',').map(Number)).map(([x, y]) => `${(x0 + x / kx).toFixed(1)},${(y0 + y / ky).toFixed(1)}`);
  return `<polyline points="${p.join(' ')}" fill="none" stroke="${colour}" stroke-width="${w}" stroke-linejoin="round"/>`;
}
// s/q: red and green squares, d: red down arrow, u: green up arrow
function marks(list, x0, y0, pal) {
  return list.trim().split(/\s+/).map(m => {
    const [a, b] = m.slice(1).split(',').map(Number), x = Math.round(x0 + a / 3), y = Math.round(y0 + b / 3);
    if (m[0] === 's' || m[0] === 'q') return box(x - 2, y - 2, 5, 5, m[0] === 's' ? pal.r : pal.g);
    return m[0] === 'd'
      ? `<path d="M${x - 1} ${y - 3}h2v3h2l-3 4l-3 -4h2z" fill="${pal.r}"/>`
      : `<path d="M${x - 1} ${y + 4}h2v-3h2l-3 -4l-3 4h2z" fill="${pal.g}"/>`;
  }).join('');
}
const tag = (x, y, s, c, bg, size = 8) => {
  const w = { 8: 29, 10: 34, 11: 37 }[size], h = size + 2;
  return box(x, y - h / 2, w, h, bg) + text(size > 8 ? x : x + 1, y + (size > 8 ? 4 : 3), s, c, 'start', size > 8 ? 'b' + size : '');
};

// ---------- 500-tick chart ----------
const price = p => 319.3 + (5000 - p) * 6.334;
const pal1 = { r: { body: '#ff6b6b', wick: '#8c5555' }, g: { body: '#66ff66', wick: '#4c8a4c' } };
let m = `<defs><linearGradient id="night" x1="0" y1="0" x2="0" y2="1"><stop offset="0" stop-color="#333"/><stop offset=".45" stop-color="#1c1c1c"/><stop offset=".9" stop-color="#000"/></linearGradient></defs>
  <rect x="2" y="101" width="1362" height="943" fill="url(#night)"/>`;
for (let p = 5030; p >= 4900; p -= 10) {
  m += line(2, 1364, price(p), '#fff', 1, '', p % 100 ? .05 : .12);
  if (p !== 4950) m += text(1367, price(p) + 3, (p + '').replace(/^(.)/, '$1 '), '#222', 'start', p % 100 ? '' : 'b9');
}
m += candles(`r610,635,860,866 g682,716,862,886 r596,712,786,788 r738,789,860,876 r828,853,1071,1082 g955,981,1073,1085 r955,987,1198,1230
g1153,1199,1201,1281 g1135,1195,1200,1238 g1133,1175,1194,1287 r1098,1179,1206,1222 r1187,1204,1365,1398 r1363,1363,1395,1514 r1346,1398,1464,1496
g1418,1418,1468,1536 g1244,1287,1425,1428 g1127,1158,1284,1316 r1148,1161,1343,1406 g1200,1200,1340,1342 g1084,1135,1198,1222 r1018,1119,1279,1281
g1146,1153,1276,1326 g1041,1055,1146,1214 g995,999,1052,1103 g930,997,999,1008 g930,995,1000,1043 g905,930,990,1004 r870,927,954,972 g881,938,949,1014
g836,871,928,956 g715,733,872,896 r742,742,842,860 r835,835,919,948 r920,922,1078,1085 g982,995,1074,1076 g905,953,990,1020 r898,956,1014,1025
g910,927,1016,1033 g860,884,931,944 r800,879,925,936 r915,917,965,991 g871,892,962,984 g763,835,888,898 g755,773,834,896 r718,768,914,923
g848,906,910,930 g817,819,908,930 r820,822,837,926 g693,762,841,848 g673,690,760,770 r660,686,743,745 r730,738,781,797 g693,703,785,847
r668,703,769,782 g634,652,771,773 r616,642,687,711 r652,678,880,897 g798,879,892,910 g806,839,888,952 r823,844,906,915 g846,849,900,962
r845,853,914,940 g850,865,914,952 r858,871,922,938 g899,916,918,987 r922,922,1072,1076 r1053,1068,1089,1130 r1093,1093,1166,1232
g1088,1161,1172,1198 g982,984,1166,1192 r910,984,1015,1040 g1006,1016,1021,1105 g972,1000,1015,1017 r995,1002,1014,1016 r917,938,954,980`,
  0, 6.1, 5.55, 4.6, 260, 2.703, pal1);
m += candles(`g876,890,936,960 g832,840,897,907 r780,843,922,1017 r877,928,943,1020 g720,775,936,990 g672,688,772,858 r613,706,852,853
r790,855,923,1004 g800,846,934,946 g745,793,852,907 g306,307,791,800 r78,303,320,340 r313,322,461,505 r441,465,828,875 r763,822,923,925
r912,930,1209,1260 g640,744,1203,1212 g288,333,744,750 r298,327,519,532 r492,522,822,854 g620,705,817,838 g538,540,711,713 g378,383,545,617
r378,378,635,637 r618,629,773,826 g676,720,779,818 r711,723,827,867 r768,828,944,962 g684,711,935,940 r693,714,801,904 g577,600,798,799
r598,605,698,822 g612,625,704,760 g530,558,621,648 g456,458,555,600 r428,455,588,590 r547,591,692,714 r657,691,790,821 r768,782,788,857
g712,731,792,840 g640,677,731,742 r657,672,690,801 g582,683,688,778 g628,628,686,754 r612,619,658,732 r590,654,678,680 g600,666,668,672
g570,648,665,668 g587,615,644,716 r491,611,687,706 g523,525,692,712 r472,530,534,563 r527,530,551,632 r498,543,627,712 r600,629,716,717
g600,619,711,724 r597,629,654,688 r628,658,720,744 g638,648,716,758 g540,597,645,664 g528,536,598,626 g468,486,541,563 r480,486,584,610
g477,477,588,592 r410,486,507,520 r513,516,540,617 g527,537,544,624 g492,529,539,578 g468,516,535,548 r508,520,541,556 r525,538,555,578
g534,537,549,570 r538,540,620,683 g576,611,619,665 g490,506,607,615 g468,510,512,516 g488,489,515,563 g305,345,492,524`,
  75, 6.1, 5.55, 4.6, 300, 3, pal1);
m += candles(`r222,228,339,345 r312,334,409,443 r393,415,495,590 r478,495,680,725 g478,606,695,722 g487,527,612,678 r462,534,622,720
r604,622,843,851 r772,839,851,972 r790,856,937,975 r935,942,1128,1168 g1000,1013,1134,1192 r935,1010,1098,1130 r1080,1089,1342,1395
g1163,1209,1342,1350 g1030,1161,1204,1242 g913,942,1165,1175 g925,942,947,1040 g717,743,937,975 r720,747,838,897 g672,804,834,840
g678,680,810,843 g450,452,672,770 r417,448,563,570 g470,500,567,588 g280,306,492,500 r290,308,338,377 g170,300,336,345 r252,291,310,357 r308,315,382,436`,
  153, 6.1, 5.55, 4.6, 340, 3, pal1);
m += marks(`d557,157 s522,235 d522,265 s541,264 d541,293 q557,353 q590,448 d473,436 d490,398 d506,446 u523,508 q523,535 q490,580
u506,602 q506,630 s440,626 d440,653 s407,699 d424,702 q473,780 u440,850 u407,845 u424,912 q424,940 s373,869 d373,897 u407,990 s257,769
u257,988 s290,998 u273,1180 q273,1210 u290,1210 s323,1035 d323,1062 s340,1118 d340,1147 u390,1045 q390,1073 u356,1256 q356,1286 u340,1357 q323,1409`,
  820, 340, { r: '#f06868', g: '#40d850' });

const red = '#f01010';
m += box(1018, 464, 346, 7, '#3c7a3c') + line(1018, 1364, 464.5, '#0f0', 1.5) + line(1018, 1364, 470.5, '#f4c8c8', 1);
[[111.5, 'R2 J'], [200.5, 'mR2 J'], [289.5, 'R1 J'], [397, 'mR1 J']].forEach(([y, s]) => m += line(850, 1250, y, '#f00', 1.6) + text(1250, y - 3, s, red, 'end'));
[[593.6, 'mS1 J'], [682.3, 'S1 J'], [789.6, 'mS2 J'], [897.3, 'S2 J'], [986, 'mS3 J']].forEach(([y, s]) => m += line(850, 1250, y, '#0f0', 1.6) + text(1250, y - 2, s, '#00e800', 'end'));
[[347.3, 'R3'], [421, 'R2'], [517.4, 'R1']].forEach(([y, s]) => m += line(911, 1056, y, '#e00') + text(1022, y - 2, s + ' 2H', red, 'end') + text(1056, y - 2, s + ' 4H', red, 'end'));
[[687.5, 'S1'], [760.5, 'S2'], [856.7, 'S3']].forEach(([y, s]) => m += line(911, 1056, y, '#00d8d8') + line(911, 1022, y, '#0c0', 1, '3 3') + text(1022, y - 2, s + ' 2H', '#00e800', 'end') + text(1056, y - 2, s + ' 4H', '#00f0f0', 'end'));
m += line(911, 1056, 590.3, '#fff', 1, '3 2') + text(1022, 588, 'Piv 2H', '#fff', 'end') + text(1056, 588, 'Piv 4H', '#fff', 'end');
[[259.6, '#a00'], [412, '#a00'], [502, '#a00'], [653.3, '#999'], [742, '#292'], [893, '#292'], [983, '#171']].forEach(([y, c]) => m += line(983, 1022, y, c, 1, '3 2'));
m += line(850, 1250, 467.3, '#b0b000', 1, '13 5') + text(1250, 465, 'Clo (J, Pré)', '#ff0', 'end') + text(1250, 465, '(Pré)', '#ff0', 'end');
m += line(850, 1250, 504.6, '#fff', 1.5, '4 3') + text(1250, 502, 'Piv J', '#fff', 'end');
m += line(416, 1364, 168.5, '#f00', 2) + text(1364, 166, 'mR1 H', red, 'end');
m += line(2, 1364, 414.5, '#f00', 2.5) + text(1364, 412, 'mR1 M', red, 'end');
m += line(416, 1364, 478.3, '#fff', 2, '4 3') + text(1364, 476, 'Piv H', '#eee', 'end');
m += line(416, 1364, 634.5, '#ff0', 2, '4 3') + text(1364, 632, 'Clo (H, Pré)', '#f4f400', 'end');
m += line(416, 1364, 866.3, '#0ff', 2) + text(1364, 864, 'mS1 H', '#00e8e8', 'end');
m += line(2, 1364, 915, '#fff', 2.5, '5 4') + text(1364, 913, 'Piv M', '#eee', 'end');

const R = '#f00', G = '#0f0';
m += curve(R, '9,80 20,120 35,185 52,215 85,287 102,325 120,380 135,418 150,457 185,508 202,538 218,573 251,628 268,648 285,663 300,678 317,704 340,717 385,748 435,765 452,775 500,789 545,789 575,797 630,801 718,805', 0, 260, 3, 2.703);
m += curve(G, '718,805 735,806', 0, 260, 3, 2.703) + curve(R, '735,806 803,808', 0, 260, 3, 2.703) + curve(G, '803,808 880,804 920,801 945,797', 0, 260, 3, 2.703) + curve(R, '945,797 1180,805 1262,805', 0, 260, 3, 2.703);
[[R, '0,774 92,774 105,790 112,830 124,904'], [G, '124,904 140,900 157,868 165,800 174,710 191,592 208,573'], [R, '208,573 224,588 240,612 257,664 274,688'],
 [G, '274,688 290,672 307,664'], [R, '307,664 325,664'], [G, '325,665 357,662 392,650'], [R, '392,650 440,655 457,662 473,674 495,675'], [G, '495,675 508,676'],
 [R, '508,677 541,677'], [G, '541,677 573,668 590,664 605,664'], [R, '605,664 625,683 657,689 724,691'], [G, '724,691 757,685 860,676 940,672'], [R, '940,672 973,674'],
 [G, '973,674 1007,672 1023,657 1040,655 1073,627 1120,621 1373,620']].forEach(([c, p]) => m += curve(c, p, 420, 300, 3, 3));
m += curve(R, '173,503 206,600 224,672 240,765 257,790 273,843 290,866 306,933 323,954 356,974 390,977', 820, 340, 3, 3);
m += curve(G, '390,977 430,950 473,937 523,890 540,812 557,762 573,742 590,735', 820, 340, 3, 3);

const dark = '#1c1c1c';
[[111.5, '5 032,8', '#f00'], [200.5, '5 018,8', '#f00'], [289.5, '5 004,8', '#f00'], [397, '4 987,8', '#f00'], [459, '4 977,2', '#0d0'], [504.6, '4 970,8', '#fff'],
 [584, '4 958,2', '#0f0'], [594, '4 956,8', '#0f0'], [634.5, '4 950,3', '#ff0'], [682, '4 942,8', '#0f0'], [789.6, '4 925,8', '#0f0'], [897.3, '4 908,8', '#0f0'], [986, '4 894,8', '#0f0']]
  .forEach(([y, s, c]) => m += tag(1367, y, s, c, dark));
m += tag(1367, 169, '5 023,9', '#f11', dark, 10) + tag(1367, 414.5, '4 985,0', '#f11', dark, 11) + tag(1367, 480.5, '4 974,9', '#fff', dark, 10);
m += box(1367, 461, 37, 12, '#111') + box(1367, 461, 15, 12, '#ffb4ae') + text(1368, 471, '0T', '#000', 'start', 'b10') + text(1382, 471, '76,7', '#ff0', 'start', 'b10');
m += tag(1367, 867, '4 913,7', '#0ff', dark, 10) + tag(1367, 915, '4 906,0', '#fff', dark, 11);

[[84, '11:04'], [145, '13:07'], [189, '15:00'], [295, '17:01'], [350, '19:02'], [378, '21:07'], [416, '17', 1], [439, '03:11'], [484, '09:03'], [606, '11:04'], [661, '13:08'],
 [705, '15:11'], [772, '17:08'], [811, '19:33'], [850, '18', 1], [883, '06:52'], [911, '09:01'], [1022, '11:07'], [1056, '13:01'], [1094, '15:14'], [1128, '17:08'], [1161, '19:02'],
 [1200, '21:14'], [1250, '19', 1], [1305, '03:12'], [1339, '05:06']].forEach(([x, s, b]) => m += vline(x, 1044, 1046, '#888') + text(x, 1054, s, '#111', 'middle', b ? 'b9' : ''));
m += text(4, 1042, '© IT-Finance.com Données indicatives', '#e00000', 'start', 'tiny');
const header = (x, w, icons) => box(x, 102, w, 11, '#b9d5e3') + text(x + 2, 110, 'Prix') +
  icons.map((n, i) => `<use href="#i-${n}" x="${x + 17 + i * 12}" y="102" width="11" height="11"/>`).join('');
m += header(2, 53, ['wrench', 'down', 'up']) + text(58, 110, 'Jour :+Haut 4 987,7 +Bas 4 923,5', red);
document.getElementById('main-chart').innerHTML = m;

// ---------- 5-minute chart with RSI ----------
const pal2 = { r: { body: '#fb2020', wick: '#c83030' }, g: { body: '#1cae24', wick: '#2c7a30' } };
let s = `<defs><linearGradient id="grey" x1="0" y1="0" x2="0" y2="1"><stop offset="0" stop-color="#cecece"/><stop offset="1" stop-color="#999"/></linearGradient></defs>
  <rect x="1409" y="101" width="469" height="650" fill="url(#grey)"/>`;
[1448, 1503, 1557, 1612, 1666, 1720, 1775, 1830].forEach(x => s += `<line x1="${x}.500" x2="${x}.500" y1="101" y2="751" stroke="#000" stroke-opacity=".12"/>`);
[[122.3, '4 990'], [186.7, '4 980'], [250.3, '4 970'], [282, '4 965'], [314, '4 960'], [346, '4 955'], [410, '4 945'], [442, '4 940'], [474, '4 935'], [505.7, '4 930'], [537.7, '4 925']]
  .forEach(([y, t]) => s += line(1409, 1878, y, '#000', 1, '', .1) + text(1881, y + 3, t));
[[593.5, '90'], [609.5, '80'], [625.5, '70'], [674, '40'], [690, '30'], [706, '20'], [722, '10']].forEach(([y, t]) => s += line(1409, 1878, y, '#000', 1, '', .1) + text(1881, y + 3, t));
s += vline(1738.5, 101, 751, '#ddd') + line(1409, 1878, 479.5, '#ddd');
s += candles(`r500,522,556,582 g525,527,557,558 g472,474,527,530 r452,464,474,480 g418,425,447,462 r420,422,435,460 r444,446,503,505 r478,492,558,560
g520,531,558,560 r532,533,557,560 g527,532,550,556 g503,526,530,556 g502,504,527,530 r503,504,526,537 r533,536,551,554 r553,555,578,580
r538,567,578,580 g520,523,586,606 r530,532,551,553 g521,524,550,552 r520,531,551,553 g548,549,551,578 r522,540,550,565 g492,496,524,530
g460,463,504,525 r470,473,516,520 g487,489,518,545 r457,477,564,567 g535,537,556,560 r510,526,538,540 r533,542,593,620 g545,563,594,617
g412,438,559,585 r403,438,600,632 r577,595,643,645 g507,517,650,662 r520,523,602,610 r548,604,688,720 r688,690,715,792 r708,710,868,870
r868,868,902,917 g780,800,902,915 g765,780,806,850 g760,766,780,875 r760,765,985,1112 g870,897,985,1138 r870,890,1090,1100 r1070,1090,1127,1342
g985,1090,1133,1180 g855,882,1093,1123 r870,888,908,970 g680,697,902,910 r695,705,820,830 g610,710,826,830 r690,703,737,787 g640,702,730,740
g352,441,705,715 r395,447,506,520 g455,472,510,520 g255,283,478,485 r220,279,290,310 r250,288,318,320 g100,240,315,325 g190,206,238,250
r200,202,279,282 r230,279,304,308 r295,297,372,380 g315,330,360,367`, 0, 1412, 4.54, 3.6, 100, 3, pal2);
s += marks(`d879,97 s852,173 d852,203 s839,240 q879,330 d852,295 q852,347 d799,340 d825,412 q935,389 u839,495 q825,523 q839,525 s758,599 d785,598
s771,626 d744,640 d771,655 s730,661 q799,719 q785,763 s703,815 d703,843 q744,850 u758,855 s635,714 d635,740 s662,843 s649,882 u635,1130 q635,1156
u649,1158 u730,937 q716,1018 s676,1044 d676,1072 u689,1203 q689,1233 u676,1358 q676,1386 q628,972`, 1400, 100, { r: '#e04848', g: '#24b838' });
const r2 = '#fa1414', g2 = '#007a00';
s += line(1409, 1878, 136.5, R, 1.3) + text(1878, 134, 'mR1 J', r2, 'end') + line(1409, 1878, 154.5, R, 2.5) + text(1878, 152, 'mR1 M', r2, 'end');
s += line(1612, 1830, 160.5, R, 1.2) + text(1720, 158, 'vR2 2H', r2, 'end') + text(1830, 158, 'R2 4H', r2, 'end') + line(1666, 1716, 153, r2, 1, '2 2') + text(1720, 150, 'R2 1H', r2, 'end');
s += line(1612, 1830, 258, R, 1.2) + text(1720, 256, 'R1 2H', r2, 'end') + text(1830, 256, 'R1 4H', r2, 'end') + line(1666, 1716, 243, r2, 1, '2 2') + text(1720, 240, 'R1 1H', r2, 'end');
s += line(1716, 1878, 204.5, '#0f0', 1.3) + line(1716, 1878, 210.5, '#eef', 1) + line(1409, 1878, 207.5, '#ff0', 1.6, '13 4') + text(1878, 205, 'Clo (J, Pré)', '#f0f000', 'end');
s += line(1409, 1878, 219, '#000', 1.8, '4 3') + text(1878, 217, 'Piv H', '#222', 'end') + line(1409, 1878, 245, '#000', 1.3, '3 3') + text(1878, 243, 'Piv J', '#222', 'end');
s += line(1612, 1830, 332, '#222', 1, '3 2') + text(1720, 330, 'Piv 2H', '#222', 'end') + text(1830, 330, 'Piv 4H', '#222', 'end');
s += line(1666, 1716, 394.5, '#222', 1, '2 2') + text(1720, 392, 'Piv 1H', '#222', 'end');
[[334.5, 'mS1 J'], [424, 'S1 J'], [532.5, 'mS2 J']].forEach(([y, t]) => s += line(1409, 1878, y, '#006400', 1.6) + text(1878, y - 2, t, g2, 'end'));
s += line(1409, 1878, 376, '#ff0', 1.8, '4 3') + text(1878, 374, 'Clo (H, Pré)', '#f0f000', 'end');
[[429.5, 'S1'], [503, 'S2']].forEach(([y, t]) => s += line(1612, 1830, y, '#2020e8', 1.3) + line(1612, 1716, y, '#3a8a4a', 1, '3 3') + text(1720, y - 2, t + ' 2H', g2, 'end') + text(1830, y - 2, t + ' 4H', '#1818e0', 'end'));
s += line(1666, 1716, 484.5, g2, 1, '2 2') + text(1720, 482, 'S1 1H', g2, 'end');
[136.5, 154.5, 160.5, 245, 258, 332, 334.5, 376, 394.5, 424, 429.5, 484.5, 503, 532.5].forEach(y => s += `<circle cx="1716" cy="${y}" r="1.300" fill="#ccc" stroke="#777" stroke-width=".6"/>`);
s += curve(G, '27,443 458,443', 1400, 100, 3, 3);
s += curve(R, '458,443 472,490 485,520 498,532 525,552 540,575 555,605 580,632 597,660 608,664 622,715 635,765 645,830 665,895 672,905 683,918 716,922', 1400, 100, 3, 3);
s += curve(G, '716,922 730,917 745,898 785,888 839,845 852,800 866,757 880,748 895,710 907,690 948,678', 1400, 100, 3, 3);

const rsi = '27,870 36,868 50,866 64,845 77,828 90,812 104,812 118,830 131,850 145,858 158,862 172,860 185,855 199,848 213,849 226,858 240,872 254,870 267,870 281,857 294,853 308,855 322,864 335,855 348,826 362,818 376,828 390,830 403,836 417,850 430,846 444,868 458,875 472,820 485,836 499,878 512,862 526,852 540,880 553,905 567,925 581,944 595,925 608,906 622,903 635,925 649,940 662,945 676,968 689,940 703,900 716,875 730,852 743,843 757,838 771,834 785,828 798,798 811,780 825,784 839,765 852,752 866,758 880,750 894,748 907,752 920,768 935,780 948,780';
const fast = '27,855 36,850 50,850 64,818 77,795 90,778 104,780 118,808 131,842 145,858 158,864 172,858 185,848 199,838 213,842 226,860 240,876 254,870 267,868 281,853 294,845 308,850 322,865 335,853 348,812 362,792 376,805 390,815 403,820 417,858 430,840 444,872 458,880 472,805 485,832 499,888 512,862 526,850 540,890 553,922 567,942 581,962 595,945 608,915 622,910 635,935 649,955 662,960 676,985 689,950 703,905 716,870 730,838 743,825 757,820 771,816 785,808 798,768 811,752 825,756 839,735 852,720 866,727 880,722 894,717 907,722 920,745 935,768 948,770';
const area = rsi.split(' ').map(p => p.split(',').map(Number)).map(([x, y]) => `${(1400 + x / 3).toFixed(1)},${(380 + y / 3).toFixed(1)}`).join(' ');
s += `<clipPath id="above"><rect x="1409" y="572" width="469" height="86"/></clipPath><clipPath id="below"><rect x="1409" y="658" width="469" height="90"/></clipPath>
  <polygon points="1409,658 ${area} 1716,658" fill="#60cc62" clip-path="url(#above)"/><polygon points="1409,658 ${area} 1716,658" fill="#c85e5e" clip-path="url(#below)"/>`;
s += curve('#222', rsi, 1400, 380, 3, 3, 1.3) + curve('#e0dc20', fast, 1400, 380, 3, 3, 1);
fast.split(' ').forEach(p => { const [x, y] = p.split(',').map(Number); s += `<circle cx="${(1400 + x / 3).toFixed(1)}" cy="${(380 + y / 3).toFixed(1)}" r="1" fill="#999" stroke="#e8e420" stroke-width=".8"/>`; });
s += line(1409, 1878, 658, '#ddd', 1, '2 2') + line(1409, 1878, 625.5, '#20e020', 1, '4 2') + line(1409, 1878, 690, '#f03030', 1, '4 2') + line(1409, 1878, 738, R, 1.6);
s += box(1409, 572, 509, 2, '#b4cbd6') + line(1409, 1878, 577.8, '#0f0', 1.6);
s += box(1409, 574, 282, 11, '#b9d5e3') + text(1410, 582, 'Relative strength index (RSI) (21) Relative strength index (RSI) (14)');
['wrench', 'win', 'close'].forEach((n, i) => s += `<use href="#i-${n}" x="${1656 + i * 12}" y="574" width="11" height="11"/>`);
[[581.5, '100'], [661, '50'], [741, '0']].forEach(([y, t]) => s += text(1881, y, t, '#000', 'start', 'b9'));
s += tag(1880, 199, '4 977,2', '#3ad83a', '#999') + tag(1880, 220.5, '4 974,9', '#000', '#999', 10) + box(1880, 202, 35, 12, '#84f084') + text(1881, 212, '1m05s', '#000', 'start', 'b11');
s += tag(1880, 154.5, '4 985,0', '#f01010', '#999', 11) + tag(1880, 325.5, '4 958,2', '#40f840', '#999') + tag(1880, 376, '4 950,3', '#ffff20', '#999');
s += tag(1880, 479.5, '4 934,1', '#222', '#ff0') + tag(1880, 532.5, '4 925,8', '#007010', '#999') + tag(1880, 632, '63,349', '#ff2', '#999', 10) + tag(1880, 644.5, '60,927', '#000', '#999', 11);
[[1448, '06:00'], [1503, '07:00'], [1557, '08:00'], [1612, '09:00'], [1666, '10:00'], [1830, '13:00']].forEach(([x, t]) => s += vline(x, 751, 753, '#888') + text(x, 761, t, '#222', 'middle'));
s += box(1693, 754, 92, 9, '#ff0') + text(1694, 761, 'mar. 18 août 2020 11:20');
s += header(1409, 77, ['wrench', 'win', 'close', 'down', 'up']) + text(1488, 110, 'Jour :+Haut 4 987,7 +Bas 4 923,5', r2);
s += text(1410, 571, '© IT-Finance.com Données indicatives', '#e01010', 'start', 'tiny');
document.getElementById('side-chart').innerHTML = s;
```
